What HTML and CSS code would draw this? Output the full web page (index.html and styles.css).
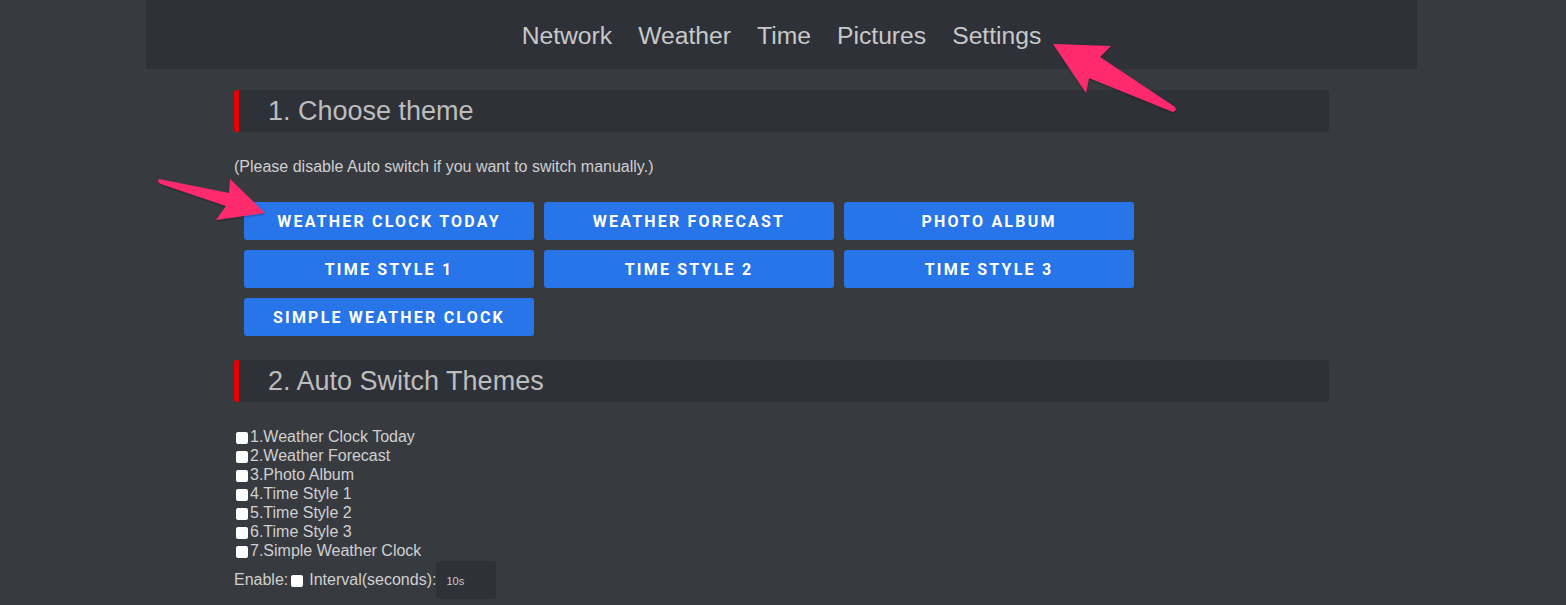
FILE: index.html
```html
<!DOCTYPE html>
<html>
<head>
<meta charset="utf-8">
<link rel="stylesheet" href="styles.css">
</head>
<body>
<nav class="nav">
  <a class="nav-link">Network</a>
  <a class="nav-link">Weather</a>
  <a class="nav-link">Time</a>
  <a class="nav-link">Pictures</a>
  <a class="nav-link">Settings</a>
</nav>
<main class="main">
  <h2 class="heading">1. Choose theme</h2>
  <p class="note">(Please disable Auto switch if you want to switch manually.)</p>
  <div class="buttons">
    <button class="btn">Weather Clock Today</button>
    <button class="btn">Weather Forecast</button>
    <button class="btn">Photo Album</button>
    <button class="btn">Time Style 1</button>
    <button class="btn">Time Style 2</button>
    <button class="btn">Time Style 3</button>
    <button class="btn">Simple Weather Clock</button>
  </div>
  <h2 class="heading heading-2">2. Auto Switch Themes</h2>
  <div class="checks">
    <label class="check"><input type="checkbox" class="box">1.Weather Clock Today</label>
    <label class="check"><input type="checkbox" class="box">2.Weather Forecast</label>
    <label class="check"><input type="checkbox" class="box">3.Photo Album</label>
    <label class="check"><input type="checkbox" class="box">4.Time Style 1</label>
    <label class="check"><input type="checkbox" class="box">5.Time Style 2</label>
    <label class="check"><input type="checkbox" class="box">6.Time Style 3</label>
    <label class="check"><input type="checkbox" class="box">7.Simple Weather Clock</label>
  </div>
  <div class="enable-row">
    <span>Enable:</span><input type="checkbox" class="box box-enable"><span class="interval">Interval(seconds):</span><input class="interval-input" type="text" value="10s">
  </div>
</main>
<svg class="arrows" width="1566" height="605" viewBox="0 0 1566 605">
  <defs>
    <filter id="sh" x="-20%" y="-20%" width="140%" height="140%">
      <feDropShadow dx="0" dy="1" stdDeviation="1.2" flood-color="#000" flood-opacity="0.35"/>
    </filter>
  </defs>
  <polygon filter="url(#sh)" fill="#ff2a6d" points="1053,44 1111,46 1100,57 1175,107 1176,110 1173,112 1089,78 1086,93"/>
  <polygon filter="url(#sh)" fill="#ff2a6d" points="159,179 229,193 230,179 265,213 216,220 226,206 161,184 158,182"/>
</svg>
</body>
</html>
```

FILE: styles.css
```css
html, body {
  margin: 0;
  padding: 0;
}
body {
  background: #373a3f;
  font-family: "Liberation Sans", Arial, sans-serif;
  color: #c9c9c9;
  position: relative;
  width: 1566px;
  height: 605px;
  overflow: hidden;
}
.nav {
  margin: 0 149px 0 146px;
  height: 69px;
  background: #2f3139;
  display: flex;
  justify-content: center;
  align-items: center;
  gap: 26px;
  padding-top: 3px;
  box-sizing: border-box;
}
.nav-link {
  font-size: 24.7px;
  color: #c8c8c8;
}
.main {
  margin-left: 234px;
  width: 1095px;
}
.heading {
  margin: 21px 0 0;
  height: 42px;
  line-height: 42px;
  background: #2f3139;
  border-left: 5px solid #e60000;
  border-radius: 3px;
  padding-left: 29px;
  font-size: 27px;
  font-weight: normal;
  color: #bdbdbd;
  box-sizing: border-box;
}
.heading-2 {
  margin-top: 24px;
}
.note {
  margin: 25px 0 0;
  font-size: 16px;
  line-height: 20px;
  color: #cfcfcf;
}
.buttons {
  margin-top: 25px;
  padding-left: 10px;
  display: grid;
  grid-template-columns: repeat(3, 290px);
  gap: 10px;
}
.btn {
  height: 38px;
  border: none;
  border-radius: 3px;
  background: #2775e8;
  color: #ffffff;
  font-family: Roboto, "Liberation Sans", sans-serif;
  font-weight: 700;
  font-size: 16px;
  letter-spacing: 2.2px;
  text-transform: uppercase;
  padding: 0;
}
.checks {
  margin-top: 25px;
  display: flex;
  flex-direction: column;
}
.check {
  display: flex;
  align-items: center;
  height: 19px;
  font-size: 16px;
  color: #d0d0d0;
}
.box {
  appearance: none;
  -webkit-appearance: none;
  width: 12px;
  height: 12px;
  background: #ffffff;
  border-radius: 2px;
  margin: 2px 2px 0 2px;
}
.enable-row {
  margin-top: 1px;
  display: flex;
  align-items: center;
  font-size: 16px;
  color: #d0d0d0;
}
.box-enable {
  margin: 2px 6px 0 3px;
}
.interval-input {
  width: 60px;
  height: 38px;
  box-sizing: border-box;
  background: #2f3139;
  border: none;
  border-radius: 4px;
  padding: 2px 0 0 10px;
  font-family: "Liberation Sans", Arial, sans-serif;
  font-size: 11px;
  color: #c9c9c9;
}
.arrows {
  position: absolute;
  left: 0;
  top: 0;
  pointer-events: none;
}
```
